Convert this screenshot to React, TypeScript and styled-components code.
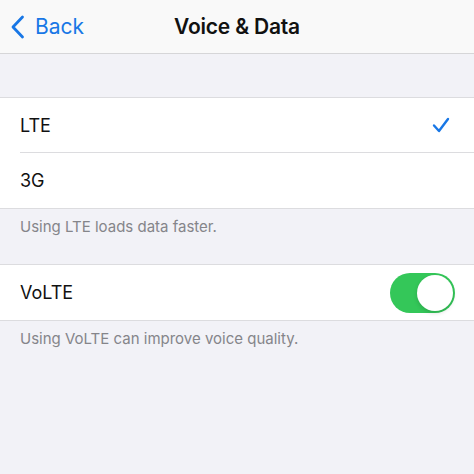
import React, { FC, useState } from "react";
import styled, { createGlobalStyle } from "styled-components";

const GlobalStyle = createGlobalStyle`
  html, body {
    margin: 0;
    padding: 0;
    background: #f2f2f7;
    font-family: Inter, "Noto Sans", "Liberation Sans", sans-serif;
    -webkit-font-smoothing: antialiased;
  }
`;

const Page = styled.div`
  min-height: 474px;
  background: #f2f2f7;
`;

const NavBar = styled.header`
  height: 53px;
  display: grid;
  grid-template-columns: 1fr auto 1fr;
  align-items: center;
  background: #f9f9f9;
  border-bottom: 1px solid #d6d6d8;
`;

const BackButton = styled.button`
  justify-self: start;
  display: flex;
  align-items: center;
  gap: 10px;
  padding: 0 0 0 10px;
  border: none;
  background: none;
  color: #1877e6;
  font: inherit;
  font-size: 21px;
  cursor: pointer;
`;

const Title = styled.h1`
  margin: 0;
  font-size: 21px;
  font-weight: 600;
  color: #111;
  letter-spacing: -0.2px;
`;

const Spacer = styled.div`
  height: 43px;
`;

const Group = styled.section`
  background: #fff;
  border-top: 1px solid #dcdcdf;
  border-bottom: 1px solid #dcdcdf;
`;

const Row = styled.div<{ $divider?: boolean }>`
  height: 55px;
  box-sizing: border-box;
  display: flex;
  align-items: center;
  justify-content: space-between;
  margin-left: 20px;
  padding-right: 20px;
  border-bottom: ${(p) => (p.$divider ? "1px solid #dcdcdf" : "none")};
  font-size: 18px;
  color: #111;
`;

const Footer = styled.p`
  margin: 0;
  padding: 9px 20px 0;
  height: 46px;
  font-size: 15px;
  line-height: 18px;
  color: #85858a;
`;

const Toggle = styled.button<{ $on: boolean }>`
  position: relative;
  width: 65px;
  height: 40px;
  margin-right: -1px;
  padding: 0;
  border: none;
  border-radius: 20px;
  background: ${(p) => (p.$on ? "#34c759" : "#e5e5ea")};
  cursor: pointer;
`;

const Knob = styled.span<{ $on: boolean }>`
  position: absolute;
  top: 2px;
  left: ${(p) => (p.$on ? "27px" : "2px")};
  width: 36px;
  height: 36px;
  border-radius: 50%;
  background: #fff;
  box-shadow: 0 2px 4px rgba(0, 0, 0, 0.15);
`;

const CheckSlot = styled.span`
  display: flex;
  margin-right: 4px;
`;

const Chevron: FC = () => (
  <svg width="15" height="24" viewBox="0 0 15 24" fill="none">
    <path
      d="M12.5 2 L3 12 L12.5 22"
      stroke="currentColor"
      strokeWidth="2.8"
      strokeLinecap="round"
      strokeLinejoin="round"
    />
  </svg>
);

const Check: FC = () => (
  <CheckSlot>
    <svg width="18" height="16" viewBox="0 0 18 16" fill="none">
      <path
        d="M2 8.5 L7 14 L16 2"
        stroke="#1877e6"
        strokeWidth="2.4"
        strokeLinecap="round"
        strokeLinejoin="round"
      />
    </svg>
  </CheckSlot>
);

export default function App() {
  const [network, setNetwork] = useState<"LTE" | "3G">("LTE");
  const [volte, setVolte] = useState(true);

  return (
    <Page>
      <GlobalStyle />
      <NavBar>
        <BackButton>
          <Chevron />
          Back
        </BackButton>
        <Title>Voice &amp; Data</Title>
        <span />
      </NavBar>
      <Spacer />
      <Group>
        <Row $divider onClick={() => setNetwork("LTE")}>
          LTE
          {network === "LTE" && <Check />}
        </Row>
        <Row onClick={() => setNetwork("3G")}>
          3G
          {network === "3G" && <Check />}
        </Row>
      </Group>
      <Footer>Using LTE loads data faster.</Footer>
      <Group>
        <Row>
          VoLTE
          <Toggle $on={volte} onClick={() => setVolte(!volte)}>
            <Knob $on={volte} />
          </Toggle>
        </Row>
      </Group>
      <Footer>Using VoLTE can improve voice quality.</Footer>
    </Page>
  );
}
